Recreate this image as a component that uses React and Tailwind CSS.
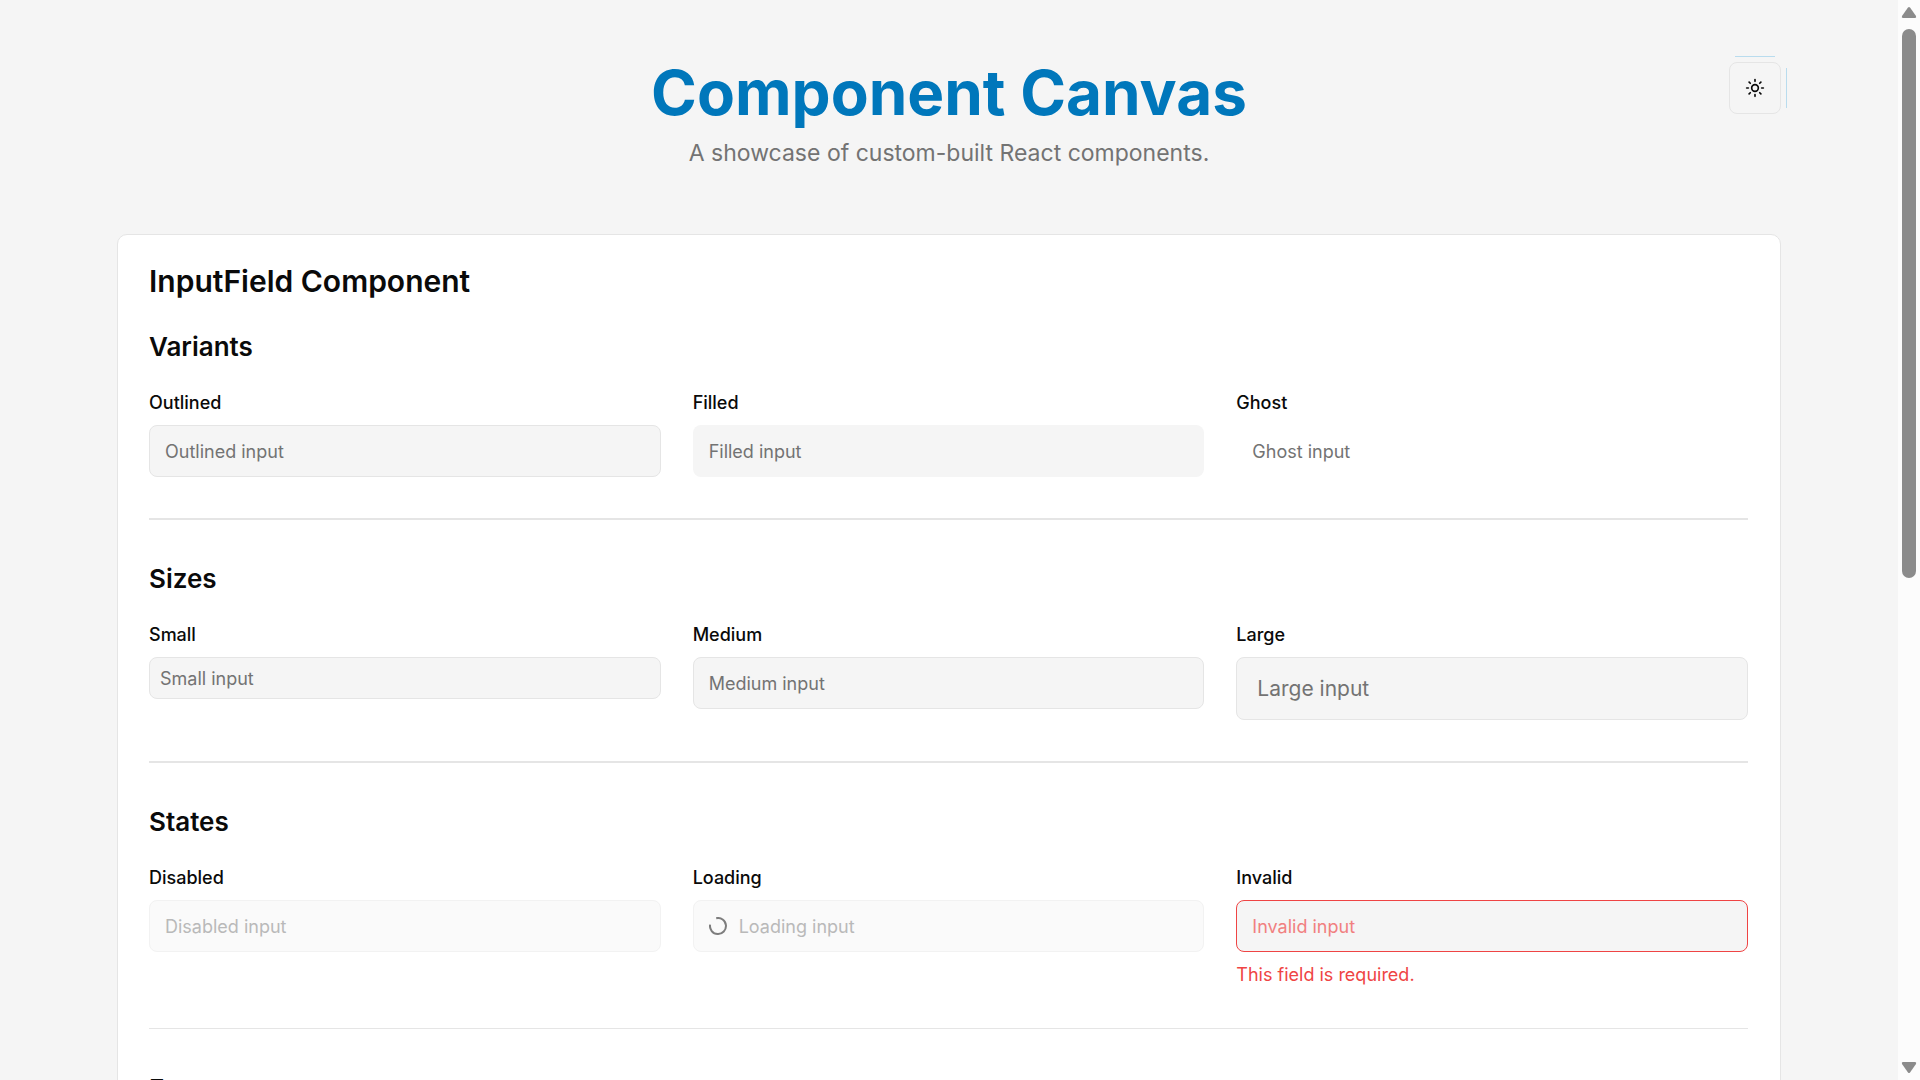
import React, { useId } from "react";
import { Sun } from "lucide-react";

const variants = {
  outlined: "border-[#e5e5e5] bg-[#f5f5f5]",
  filled: "border-transparent bg-[#f5f5f5]",
  ghost: "border-transparent bg-transparent",
  invalid: "border-[#ef4444] bg-[#f5f5f5]",
  off: "border-[#f2f2f2] bg-[#fafafa]",
};

const placeholders = {
  outlined: "placeholder:text-[#737373]",
  filled: "placeholder:text-[#737373]",
  ghost: "placeholder:text-[#737373]",
  invalid: "placeholder:text-[#f18080]",
  off: "placeholder:text-[#b9b9b9]",
};

const sizes = {
  small: "h-[42px] px-[10px] text-[18px]",
  medium: "h-[52px] px-[15px] text-[18px]",
  large: "h-[63px] px-5 text-[21px]",
};

function Spinner() {
  return (
    <svg viewBox="0 0 18 18" className="mr-3 size-[18px] shrink-0" fill="none" aria-hidden="true">
      <path d="M7.2 1.2A8 8 0 1 1 1.1 7.6" stroke="#7d7d7d" strokeWidth="2" />
    </svg>
  );
}

function InputField({ label, placeholder, variant = "outlined", size = "medium", disabled, loading, error }) {
  const id = useId();
  const off = Boolean(disabled || loading);
  const look = off ? "off" : variant;
  return (
    <div className="flex min-w-0 flex-col">
      <label htmlFor={id} className="mb-[10px] text-[18px] leading-[25px] font-medium">
        {label}
      </label>
      <div className={`flex items-center rounded-lg border ${variants[look]} ${sizes[size]}`}>
        {loading && <Spinner />}
        <input
          id={id}
          type="text"
          placeholder={placeholder}
          disabled={off}
          aria-invalid={variant === "invalid"}
          className={`w-full min-w-0 bg-transparent outline-none ${placeholders[look]}`}
        />
      </div>
      {error && <p className="mt-[10px] text-[18px] leading-[25px] text-[#ef4444]">{error}</p>}
    </div>
  );
}

function Group({ title, children }) {
  return (
    <section>
      <h3 className="mb-[26px] text-[26px] leading-[35px] font-semibold">{title}</h3>
      <div className="grid grid-cols-3 items-start gap-8">{children}</div>
    </section>
  );
}

function ScrollBar() {
  return (
    <div className="flex w-[22px] shrink-0 flex-col items-center bg-[#fcfcfc] py-[6px] text-[#8b8b8b]" aria-hidden="true">
      <svg viewBox="0 0 16 12" className="h-3 w-4" fill="currentColor">
        <path d="M7 1.5Q8 .3 9 1.5L15 10Q15.800 12 14 12H2Q.2 12 1 10Z" />
      </svg>
      <div className="mt-[11px] h-[549px] w-[14px] rounded-full bg-[#8b8b8b]" />
      <svg viewBox="0 0 16 12" className="mt-auto h-3 w-4" fill="currentColor">
        <path d="M7 10.500Q8 11.700 9 10.500L15 2Q15.800 0 14 0H2Q.2 0 1 2Z" />
      </svg>
    </div>
  );
}

export default function App() {
  return (
    <div className="flex h-screen overflow-hidden bg-[#f5f5f5] font-['Inter',sans-serif] text-[#0a0a0a]">
      <main className="min-w-0 flex-1 overflow-hidden">
        <div className="mx-auto max-w-[1664px] pt-[62px]">
          <header className="relative mb-16 text-center">
            <h1 className="text-[62px] leading-[62px] font-bold text-[#0077bb]">Component Canvas</h1>
            <p className="mt-3 text-[23px] leading-[34px] text-[#737373]">
              A showcase of custom-built React components.
            </p>
            <div className="absolute top-0 right-0">
              <button
                type="button"
                aria-label="Toggle theme"
                className="flex size-[52px] items-center justify-center rounded-lg border border-[#e5e5e5]"
              >
                <Sun size={20} />
              </button>
              <span className="absolute -top-[6px] left-[6px] h-px w-10 bg-[#b9dcee]" />
              <span className="absolute top-[6px] -right-[6px] h-10 w-px bg-[#b9dcee]" />
            </div>
          </header>
          <div className="rounded-[10px] border border-[#e5e5e5] bg-white py-[31px] pr-8 pl-[31px]">
            <h2 className="mb-[33px] text-[30px] leading-[30px] font-semibold">InputField Component</h2>
            <Group title="Variants">
              <InputField label="Outlined" placeholder="Outlined input" />
              <InputField label="Filled" placeholder="Filled input" variant="filled" />
              <InputField label="Ghost" placeholder="Ghost input" variant="ghost" />
            </Group>
            <hr className="my-[41px] border-t-2 border-[#e5e5e5]" />
            <Group title="Sizes">
              <InputField label="Small" placeholder="Small input" size="small" />
              <InputField label="Medium" placeholder="Medium input" />
              <InputField label="Large" placeholder="Large input" size="large" />
            </Group>
            <hr className="my-[41px] border-t-2 border-[#e5e5e5]" />
            <Group title="States">
              <InputField label="Disabled" placeholder="Disabled input" disabled />
              <InputField label="Loading" placeholder="Loading input" loading />
              <InputField label="Invalid" placeholder="Invalid input" variant="invalid" error="This field is required." />
            </Group>
            <hr className="mt-[41px] mb-[42px] border-t border-[#e5e5e5]" />
            <Group title="Form" />
          </div>
        </div>
      </main>
      <ScrollBar />
    </div>
  );
}
